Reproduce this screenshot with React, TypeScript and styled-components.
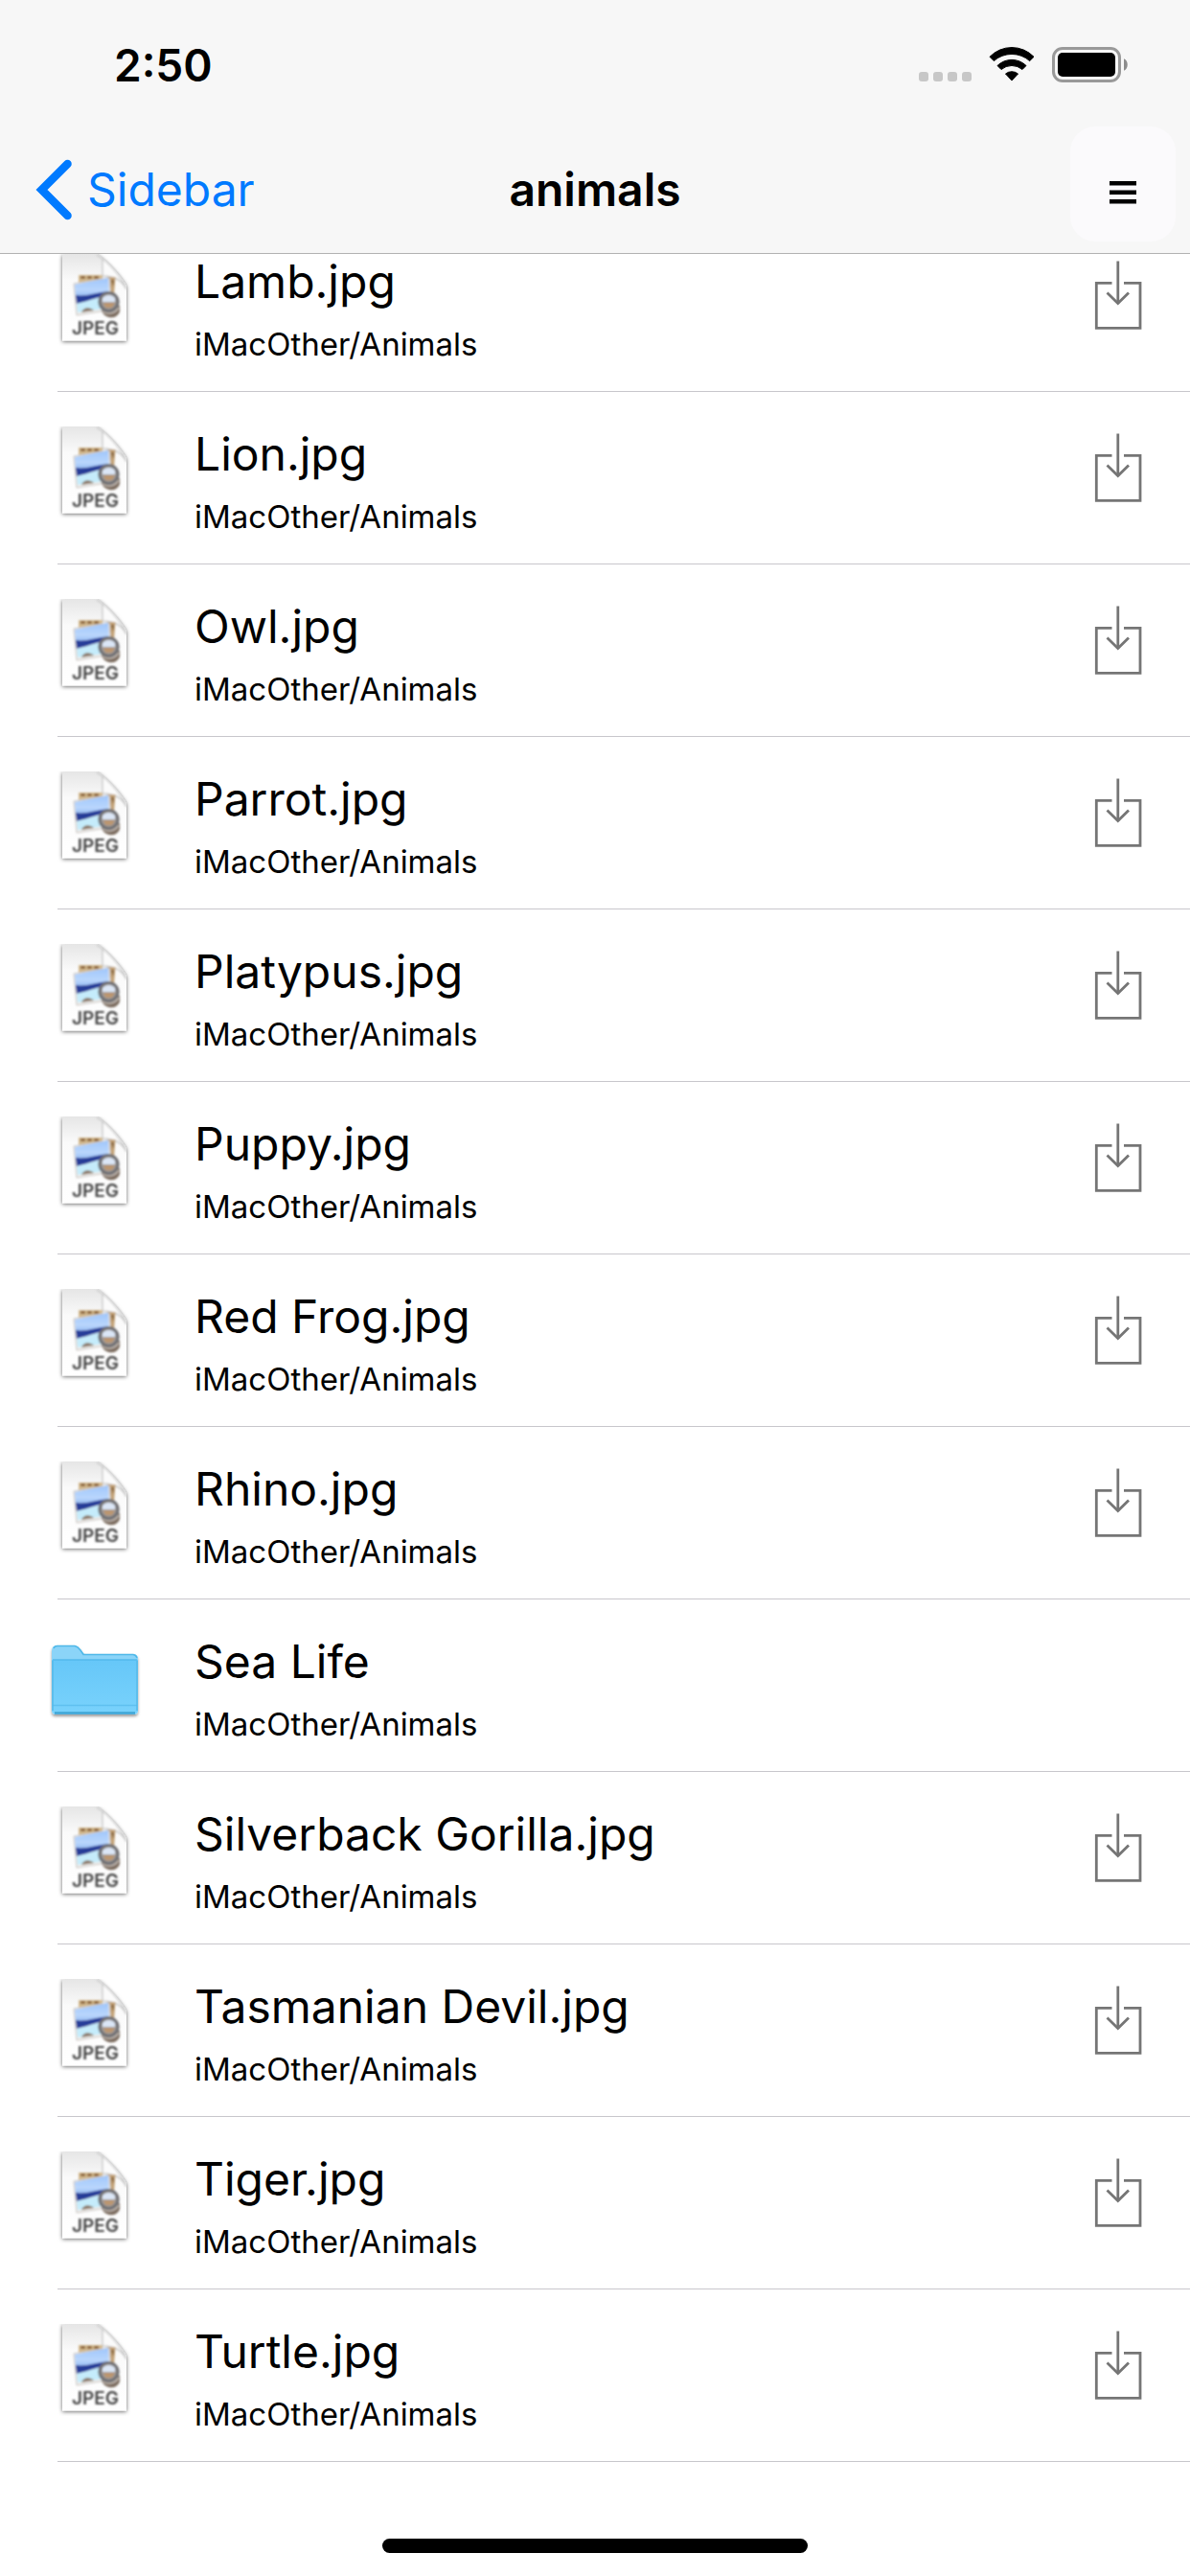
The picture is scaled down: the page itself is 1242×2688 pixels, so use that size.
import { FC } from 'react';
import styled, { createGlobalStyle } from 'styled-components';

const GlobalStyle = createGlobalStyle`
  * {
    box-sizing: border-box;
  }

  body {
    margin: 0;
    background: #fff;
    color: #000;
    font-family: Inter, 'Liberation Sans', sans-serif;
  }
`;

const Page = styled.div`
  display: flex;
  flex-direction: column;
  min-height: 100vh;
`;

const Header = styled.header`
  position: sticky;
  top: 0;
  z-index: 1;
  background: #f7f7f7;
  border-bottom: 1px solid #b2b2b2;
`;

const StatusBar = styled.div`
  display: flex;
  align-items: center;
  justify-content: space-between;
  height: 132px;
  padding: 3px 64px 0 119px;
`;

const Time = styled.time`
  font-size: 46px;
  line-height: 60px;
  font-weight: 600;
`;

const StatusIcons = styled.div`
  display: flex;
  align-items: center;
  gap: 18px;
`;

const NavBar = styled.nav`
  display: grid;
  grid-template-columns: 1fr auto 1fr;
  align-items: center;
  height: 132px;
  padding: 0 15px;
`;

const BackLink = styled.a`
  display: flex;
  align-items: center;
  justify-self: start;
  gap: 14px;
  padding-left: 22px;
  color: #007aff;
  font-size: 48px;
  line-height: 60px;
  text-decoration: none;
`;

const Title = styled.h1`
  margin: 0;
  font-size: 48px;
  line-height: 60px;
  font-weight: 600;
`;

const MenuButton = styled.button`
  display: grid;
  place-items: center;
  align-self: start;
  justify-self: end;
  width: 110px;
  height: 120px;
  padding: 18px 0 0;
  border: 0;
  border-radius: 26px;
  background: #fbfafc;
`;

/* The list is scrolled, so its first row starts beneath the header */
const List = styled.ul`
  margin: -36px 0 0;
  padding: 0 0 0 60px;
  list-style: none;
`;

const Row = styled.li`
  display: flex;
  align-items: flex-start;
  height: 180px;
  padding-right: 48px;
  border-bottom: 1px solid #c8c7cc;
`;

const IconContainer = styled.div`
  flex: none;
  width: 96px;
  height: 96px;
  margin: 36px 48px 0 -9px;

  svg {
    display: block;
  }
`;

const Info = styled.div`
  flex: 1;
  min-width: 0;
  padding: 35px 0 0 8px;
`;

const Name = styled.p`
  margin: 0;
  font-size: 48px;
  line-height: 60px;
  white-space: nowrap;
`;

const Path = styled.p`
  margin: 15px 0 0;
  font-size: 33px;
  line-height: 40px;
`;

const DownloadButton = styled.button`
  margin-top: 40px;
  padding: 0;
  border: 0;
  background: none;

  svg {
    display: block;
  }
`;

const HomeArea = styled.footer`
  display: flex;
  justify-content: center;
  margin-top: auto;
  padding: 24px 0;
`;

const HomeIndicator = styled.div`
  width: 444px;
  height: 15px;
  border-radius: 8px;
  background: #000;
`;

const SignalIcon: FC = () => (
  <svg width="55" height="37" viewBox="0 0 55 37" fill="#c7c7c7">
    <rect x="0" y="26" width="10" height="10" rx="3" />
    <rect x="15" y="26" width="10" height="10" rx="3" />
    <rect x="30" y="26" width="10" height="10" rx="3" />
    <rect x="45" y="26" width="10" height="10" rx="3" />
  </svg>
);

const WifiIcon: FC = () => (
  <svg width="48" height="37" viewBox="0 0 48 37" stroke="#000" strokeWidth="1" strokeLinejoin="round">
    <path d="M1 10.300 A32 32 0 0 1 47 10.300 L42.700 14.600 A28 28 0 0 0 5.300 14.600Z" />
    <path d="M9 19.500 A21.500 21.500 0 0 1 39 19.500 L35 23.500 A17 17 0 0 0 13 23.500Z" />
    <path d="M17.500 28 A10.500 10.500 0 0 1 30.500 28 L24 35Z" />
  </svg>
);

const BatteryIcon: FC = () => (
  <svg width="80" height="37" viewBox="0 0 80 37">
    <rect x="1.5" y="1.5" width="69" height="34" rx="9.5" fill="none" stroke="#999" strokeWidth="3" />
    <rect x="6" y="6" width="60" height="25" rx="5" />
    <path d="M75 12.2 C80 14 80 23 75 24.8Z" fill="#8c8c8c" />
  </svg>
);

const BackIcon: FC = () => (
  <svg width="40" height="64" viewBox="0 0 40 64" fill="none" stroke="#007aff">
    <path d="M33.5 5 L6.500 32 L33.5 59" strokeWidth="8.5" strokeLinecap="round" />
  </svg>
);

const MenuIcon: FC = () => (
  <svg width="28" height="24" viewBox="0 0 28 24">
    <path d="M0 0h28v4.5H0z M0 9.5h28v4.5H0z M0 19h28v4.5H0z" />
  </svg>
);

const DownloadIcon: FC = () => (
  <svg width="54" height="76" viewBox="0 0 54 76" fill="none" stroke="#757575" strokeWidth="2.8">
    <path d="M20.5 26.3 H4.3 V73.3 H50 V26.3 H33" />
    <path d="M26.8 3.5 V48" />
    <path d="M15.500 36.5 L26.8 47.5 L38 36.5" />
  </svg>
);

const JpegIcon: FC = () => (
  <svg width="96" height="96" viewBox="0 0 96 96">
    <defs>
      <linearGradient id="paper" x1="0" y1="0" x2="0" y2="1">
        <stop offset="0" stopColor="#e6e6e6" />
        <stop offset="0.3" stopColor="#fafafa" />
        <stop offset="1" stopColor="#fff" />
      </linearGradient>
      <linearGradient id="sky" x1="0" y1="0" x2="0" y2="1">
        <stop offset="0" stopColor="#9fc6fb" />
        <stop offset="0.6" stopColor="#b9d6fd" />
        <stop offset="1" stopColor="#8fb6f0" />
      </linearGradient>
      <filter id="shade" x="-10%" y="-10%" width="120%" height="120%">
        <feDropShadow dx="0" dy="1" stdDeviation="2" floodColor="#000" floodOpacity="0.6" />
      </filter>
      <filter id="soft">
        <feGaussianBlur stdDeviation="0.8" />
      </filter>
    </defs>
    <path d="M14 0.5 H50 C56 3 78 26 81 34 V90.5 H14Z" fill="url(#paper)" filter="url(#shade)" />
    <g filter="url(#soft)">
      <path d="M56 5 V23 C68 23 77 28 81 37 C78 26 62 8 50 1Z" fill="#fbfbfb" stroke="#c6c6c6" strokeWidth="1.3" />
      {/* Stack of photos */}
      <path d="M31 22 H56 V30 H31Z" fill="#d3b98e" />
      <path d="M33 24.5 H54" stroke="#8f683d" strokeWidth="3" strokeDasharray="5 2" />
      <path d="M61 24 L69.500 24 L68 42 L62 40Z" fill="#c3a174" />
      <path d="M65 27 L68 27 L67 34Z" fill="#7c5c3a" />
      <path d="M26 31 L63 25 L66 58 L29 64Z" fill="#efeeec" stroke="#c9c5c2" strokeWidth="1" />
      <path d="M27 32 L62 25 L63 42 L28 46Z" fill="url(#sky)" />
      <path d="M28 43 C38 45 50 40 63 39 L64 43 C52 44 44 49 29 52Z" fill="#283c98" />
      <path d="M29 52 C42 49 50 45 64 44 L65 56 L30 61Z" fill="#c5ecfb" />
      <path d="M34 61 C36 55 43 55 47 59Z" fill="#8b7867" />
      {/* Loupe */}
      <path d="M55 59 C58 68 71 69 74 60 V54 L56 53Z" fill="#7b6c5e" />
      <circle cx="62.500" cy="50" r="9.500" fill="#9f9a97" stroke="#717175" strokeWidth="3.2" />
      <path d="M56 46 C59 42 66 42 69 46 V50 H56Z" fill="#dbe6f6" />
      <path d="M57 51 H69 L66 56 H59Z" fill="#bb9670" />
      <path d="M56 60 C62 64 69 62 73 56" stroke="#c5bcb5" strokeWidth="1.5" fill="none" />
      <text
        x="48.500"
        y="84"
        textAnchor="middle"
        fill="#444"
        fontFamily="Inter, sans-serif"
        fontSize="19"
        fontWeight="600"
      >
        JPEG
      </text>
    </g>
  </svg>
);

const FolderIcon: FC = () => (
  <svg width="96" height="96" viewBox="0 0 96 96">
    <defs>
      <linearGradient id="folder" x1="0" y1="0" x2="0" y2="1">
        <stop offset="0" stopColor="#66c7f8" />
        <stop offset="1" stopColor="#79d2fc" />
      </linearGradient>
      <filter id="folderShade" x="-10%" y="-10%" width="120%" height="130%">
        <feDropShadow dx="0" dy="2" stdDeviation="1.4" floodColor="#000" floodOpacity="0.4" />
      </filter>
    </defs>
    <path
      d="M3 18 Q3 12 8 12 H27 Q30 12 33 16 L37 21 H88 Q93 21 93 26 V80 Q93 84 89 84 H7 Q3 84 3 80Z"
      fill="#8bd4f8"
      filter="url(#folderShade)"
    />
    <path d="M3 27 H93 V79 Q93 83 89 83 H7 Q3 83 3 79Z" fill="url(#folder)" />
    <path
      d="M5 15 Q6 12.5 9 12.5 H27 Q30 13 33 17 L36 21.5 H88 Q91 22 92 25"
      fill="none"
      stroke="#4fb8e8"
      strokeWidth="1.5"
    />
    <path d="M4 27 H92" stroke="#53b9ec" strokeWidth="1.5" />
    <path d="M4 74.5 H92" stroke="#5fc0ef" strokeWidth="1.5" />
    <path d="M6 82.5 H90" stroke="#3fa6d6" strokeWidth="2.5" />
    <path d="M4 28 V80 M92 28 V80" stroke="#57b9e8" strokeWidth="1.5" />
  </svg>
);

interface FileItem {
  name: string;
  folder?: boolean;
}

const FILES: FileItem[] = [
  { name: 'Lamb.jpg' },
  { name: 'Lion.jpg' },
  { name: 'Owl.jpg' },
  { name: 'Parrot.jpg' },
  { name: 'Platypus.jpg' },
  { name: 'Puppy.jpg' },
  { name: 'Red Frog.jpg' },
  { name: 'Rhino.jpg' },
  { name: 'Sea Life', folder: true },
  { name: 'Silverback Gorilla.jpg' },
  { name: 'Tasmanian Devil.jpg' },
  { name: 'Tiger.jpg' },
  { name: 'Turtle.jpg' },
];

const FileRow: FC<FileItem> = ({ name, folder }) => (
  <Row>
    {/* Icon */}
    <IconContainer>{folder ? <FolderIcon /> : <JpegIcon />}</IconContainer>

    {/* Info */}
    <Info>
      <Name>{name}</Name>
      <Path>iMacOther/Animals</Path>
    </Info>

    {/* Folders cannot be downloaded */}
    {!folder && (
      <DownloadButton aria-label={`Download ${name}`}>
        <DownloadIcon />
      </DownloadButton>
    )}
  </Row>
);

const App: FC = () => {
  return (
    <Page>
      <GlobalStyle />

      <Header>
        {/* Status */}
        <StatusBar>
          <Time>2:50</Time>
          <StatusIcons>
            <SignalIcon />
            <WifiIcon />
            <BatteryIcon />
          </StatusIcons>
        </StatusBar>

        {/* Navigation */}
        <NavBar>
          <BackLink href="#sidebar">
            <BackIcon />
            Sidebar
          </BackLink>
          <Title>animals</Title>
          <MenuButton aria-label="Menu">
            <MenuIcon />
          </MenuButton>
        </NavBar>
      </Header>

      {/* Files */}
      <List>
        {FILES.map((file) => (
          <FileRow key={file.name} {...file} />
        ))}
      </List>

      <HomeArea>
        <HomeIndicator />
      </HomeArea>
    </Page>
  );
};

export default App;
